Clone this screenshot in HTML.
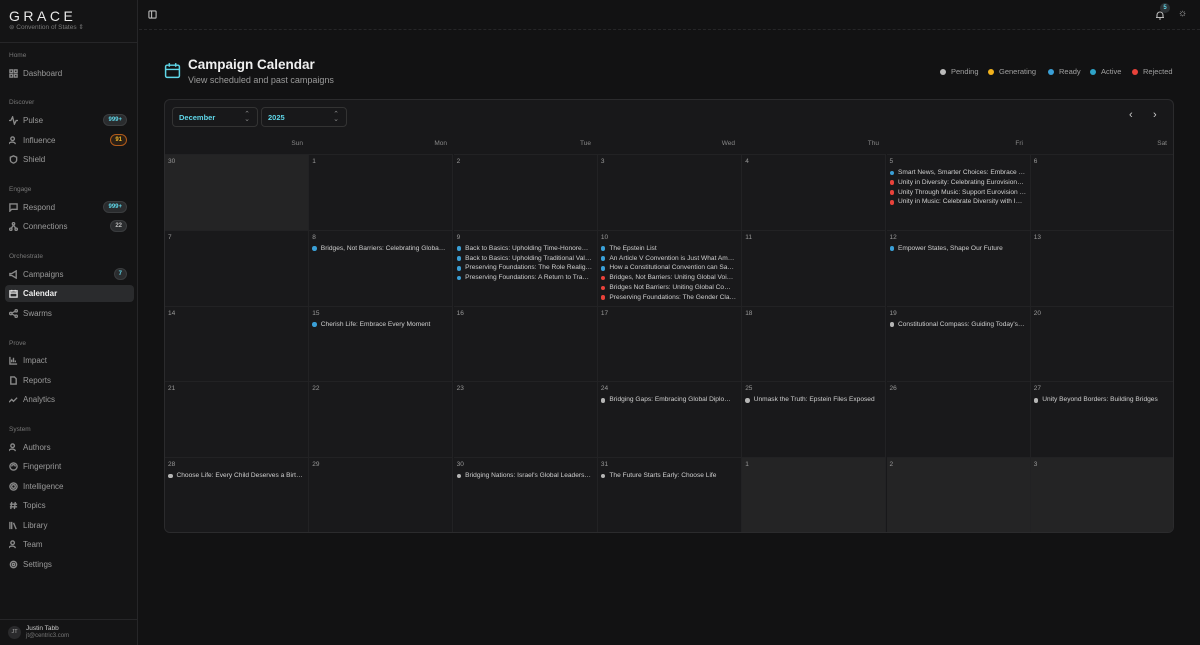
<!DOCTYPE html>
<html><head><meta charset="utf-8"><style>
*{box-sizing:border-box;margin:0;padding:0}
body{width:1200px;height:645px;background:#121213;font-family:"Liberation Sans",sans-serif;color:#ddd;overflow:hidden;position:relative}
.sb{position:absolute;left:0;top:0;width:138px;height:645px;background:#141415;border-right:1px solid #262628}
.logo{position:absolute;left:9px;top:8px;font-size:14px;letter-spacing:3.5px;color:#e8e8e8;font-weight:300}
.org{position:absolute;left:9px;top:23px;font-size:6.5px;color:#777}
.sbh{position:absolute;left:0;top:42px;width:138px;border-top:1px solid #262628}
.sec{position:absolute;left:9px;font-size:6.5px;color:#777}
.it{position:absolute;left:9px;font-size:8px;color:#9a9a9a;display:flex;align-items:center;gap:5px}
.it svg{width:9px;height:9px;stroke:#8a8a8a;fill:none;stroke-width:1.5}
.bd{position:absolute;right:10px;height:12px;border-radius:6px;font-size:6px;font-weight:bold;display:flex;align-items:center;justify-content:center;padding:0 4px;background:#2a2c2e;border:1px solid #3a3c3e;color:#5fd6e8}
.act{position:absolute;left:5px;top:285px;width:129px;height:17px;background:#2a2b2d;border-radius:4px}
.top{position:absolute;left:139px;top:0;right:0;height:30px;border-bottom:1px dashed #262628}
.card{position:absolute;left:164px;top:99px;width:1010px;height:434px;border:1px solid #2b2b2d;border-radius:6px;background:#18181a;overflow:hidden}
.sel{position:absolute;top:7px;height:20px;border:1px solid #333;border-radius:4px;font-size:7.5px;color:#5fd6e8;font-weight:bold;padding:5px 6px}
.sel span{position:absolute;right:7px;top:4px;color:#888;font-size:7px;line-height:5px;font-weight:normal}
.wd{position:absolute;top:40px;font-size:6.5px;color:#888;text-align:right;width:140px}
.cell{position:absolute;width:144px;height:76px;border-right:1px solid #222224;border-top:1px solid #222224;background:#19191b;padding:3px 3px}
.cell.o{background:#242425}
.dn{font-size:6.5px;color:#999;height:10px}
.ev{font-size:6.6px;color:#cfcfcf;height:9.8px;line-height:9.8px;white-space:nowrap;overflow:hidden;display:flex;align-items:center}
.ev i{width:4.5px;height:4.5px;border-radius:50%;margin:0 4px 0 0;flex:none;display:inline-block}
.b i{background:#3a9fd6}.r i{background:#e8423a}.g i{background:#b5b5b5}
.lg{position:absolute;top:67px;font-size:7.5px;color:#a0a0a0;display:flex;align-items:center}
.lg i{width:6px;height:6px;border-radius:50%;margin-right:5px;display:inline-block}
</style></head><body>
<div class="sb">
<div class="logo">GRACE</div>
<div class="org">⊜ Convention of States ⇕</div>
<div class="sbh"></div>
<div class="act"></div>
<div class="sec" style="top:52px">Home</div>
<div class="it" style="top:69px"><svg viewBox="0 0 10 10"><rect x="1" y="1" width="3" height="3"/><rect x="6" y="1" width="3" height="3"/><rect x="1" y="6" width="3" height="3"/><rect x="6" y="6" width="3" height="3"/></svg>Dashboard</div>
<div class="sec" style="top:99px">Discover</div>
<div class="it" style="top:116px"><svg viewBox="0 0 10 10"><path d="M0 5h2l2-4 2 8 2-4h2"/></svg>Pulse</div><div class="bd" style="top:114px">999+</div>
<div class="it" style="top:136px"><svg viewBox="0 0 10 10"><circle cx="4" cy="3" r="2"/><path d="M0 9c0-3 7-3 7 0"/></svg>Influence</div><div class="bd" style="top:134px;color:#f0b429;border-color:#b05a1a;background:#2a1f15">91</div>
<div class="it" style="top:155px"><svg viewBox="0 0 10 10"><path d="M5 1l3.5 1.5v3C8.5 8 5 9 5 9S1.5 8 1.5 5.5v-3z"/></svg>Shield</div>
<div class="sec" style="top:186px">Engage</div>
<div class="it" style="top:203px"><svg viewBox="0 0 10 10"><path d="M1 1h8v6H3L1 9z"/></svg>Respond</div><div class="bd" style="top:201px">999+</div>
<div class="it" style="top:222px"><svg viewBox="0 0 10 10"><circle cx="5" cy="2" r="1.3"/><circle cx="2" cy="8" r="1.3"/><circle cx="8" cy="8" r="1.3"/><path d="M5 3.5L2.5 7M5 3.5L7.5 7"/></svg>Connections</div><div class="bd" style="top:220px;color:#bbb">22</div>
<div class="sec" style="top:253px">Orchestrate</div>
<div class="it" style="top:270px"><svg viewBox="0 0 10 10"><path d="M1 4h2l5-3v8L3 6H1z"/></svg>Campaigns</div><div class="bd" style="top:268px">7</div>
<div class="it" style="top:289px;color:#eee"><svg viewBox="0 0 10 10" style="stroke:#ddd"><rect x="1" y="2" width="8" height="7"/><path d="M1 4.5h8M3 1v2M7 1v2"/></svg><b>Calendar</b></div>
<div class="it" style="top:309px"><svg viewBox="0 0 10 10"><circle cx="2" cy="5" r="1.3"/><circle cx="8" cy="2" r="1.3"/><circle cx="8" cy="8" r="1.3"/><path d="M3 4.5l4-2M3 5.5l4 2"/></svg>Swarms</div>
<div class="sec" style="top:340px">Prove</div>
<div class="it" style="top:356px"><svg viewBox="0 0 10 10"><path d="M1 1v8h8M3 7V4M5 7V2M7 7V5"/></svg>Impact</div>
<div class="it" style="top:376px"><svg viewBox="0 0 10 10"><path d="M2 1h4l2 2v6H2z"/></svg>Reports</div>
<div class="it" style="top:395px"><svg viewBox="0 0 10 10"><path d="M0 8l3-3 2 2 4-4"/></svg>Analytics</div>
<div class="sec" style="top:426px">System</div>
<div class="it" style="top:443px"><svg viewBox="0 0 10 10"><circle cx="4" cy="3" r="2"/><path d="M0 9c0-3 7-3 7 0"/></svg>Authors</div>
<div class="it" style="top:462px"><svg viewBox="0 0 10 10"><circle cx="5" cy="5" r="4"/><path d="M3 5a2 2 0 0 1 4 0"/></svg>Fingerprint</div>
<div class="it" style="top:482px"><svg viewBox="0 0 10 10"><circle cx="5" cy="5" r="4"/><circle cx="5" cy="5" r="2"/></svg>Intelligence</div>
<div class="it" style="top:501px"><svg viewBox="0 0 10 10"><path d="M3 1L2 9M7 1L6 9M1 3.5h8M1 6.5h8"/></svg>Topics</div>
<div class="it" style="top:521px"><svg viewBox="0 0 10 10"><path d="M1 1v8M3 1v8M5 2l3 7"/></svg>Library</div>
<div class="it" style="top:540px"><svg viewBox="0 0 10 10"><circle cx="4" cy="3" r="2"/><path d="M0 9c0-3 7-3 7 0"/></svg>Team</div>
<div class="it" style="top:560px"><svg viewBox="0 0 10 10"><circle cx="5" cy="5" r="3.5"/><circle cx="5" cy="5" r="1.3"/></svg>Settings</div>
<div style="position:absolute;left:0;top:619px;width:138px;border-top:1px solid #262628"></div>
<div style="position:absolute;left:8px;top:626px;width:13px;height:13px;border-radius:50%;background:#2a2a2c;font-size:5.5px;color:#aaa;text-align:center;line-height:13px">JT</div>
<div style="position:absolute;left:26px;top:625px;font-size:6.5px;color:#ccc">Justin Tabb</div>
<div style="position:absolute;left:26px;top:633px;font-size:6px;color:#777">jt@centric3.com</div>
</div>
<div class="top"></div>
<svg style="position:absolute;left:148px;top:10px" width="9" height="9" viewBox="0 0 10 10" fill="none" stroke="#bbb" stroke-width="1.2"><rect x="1" y="1" width="8" height="8" rx="1"/><path d="M4 1v8"/></svg>
<svg style="position:absolute;left:1155px;top:10px" width="10" height="10" viewBox="0 0 10 10" fill="none" stroke="#bbb" stroke-width="1.1"><path d="M2 7.5V5a3 3 0 0 1 6 0v2.5h1H1zM4 9h2"/></svg>
<div style="position:absolute;left:1160px;top:3px;width:10px;height:10px;border-radius:50%;background:#2c3134;font-size:6px;color:#5fd6e8;text-align:center;line-height:10px;font-weight:bold">5</div>
<div style="position:absolute;left:1178px;top:8px;font-size:10px;color:#bbb">☼</div>
<svg style="position:absolute;left:164px;top:62px" width="17" height="17" viewBox="0 0 16 16" fill="none" stroke="#5fd6e8" stroke-width="1.4"><rect x="1.5" y="3" width="13" height="11.5" rx="1.5"/><path d="M1.5 7h13M5 1v3.5M11 1v3.5"/></svg>
<div style="position:absolute;left:188px;top:57px;font-size:13.5px;font-weight:bold;color:#f0f0f0">Campaign Calendar</div>
<div style="position:absolute;left:188px;top:75px;font-size:9px;color:#9a9a9a">View scheduled and past campaigns</div>
<div class="lg" style="left:940px"><i style="background:#bbb"></i>Pending</div>
<div class="lg" style="left:988px"><i style="background:#f2b21c"></i>Generating</div>
<div class="lg" style="left:1048px"><i style="background:#3a9fd6"></i>Ready</div>
<div class="lg" style="left:1090px"><i style="background:#2ea3c8"></i>Active</div>
<div class="lg" style="left:1132px"><i style="background:#e8423a"></i>Rejected</div>
<div class="card">
<div class="sel" style="left:7px;width:86px">December<span>⌃<br>⌄</span></div>
<div class="sel" style="left:96px;width:86px">2025<span>⌃<br>⌄</span></div>
<div style="position:absolute;left:964px;top:9px;font-size:11px;color:#ccc">‹</div>
<div style="position:absolute;left:988px;top:9px;font-size:11px;color:#ccc">›</div>
<div class="wd" style="left:-2px">Sun</div><div class="wd" style="left:142px">Mon</div><div class="wd" style="left:286px">Tue</div><div class="wd" style="left:430px">Wed</div><div class="wd" style="left:574px">Thu</div><div class="wd" style="left:718px">Fri</div><div class="wd" style="left:862px">Sat</div>
<div id="g"></div>
</div>
<script>
var ev={1:[],8:[["b","Bridges, Not Barriers: Celebrating Globa…"]],9:[["b","Back to Basics: Upholding Time-Honore…"],["b","Back to Basics: Upholding Traditional Val…"],["b","Preserving Foundations: The Role Realig…"],["b","Preserving Foundations: A Return to Tra…"]],
10:[["b","The Epstein List"],["b","An Article V Convention is Just What Am…"],["b","How a Constitutional Convention can Sa…"],["r","Bridges, Not Barriers: Uniting Global Voi…"],["r","Bridges Not Barriers: Uniting Global Co…"],["r","Preserving Foundations: The Gender Cla…"]],
5:[["b","Smart News, Smarter Choices: Embrace …"],["r","Unity in Diversity: Celebrating Eurovision…"],["r","Unity Through Music: Support Eurovision …"],["r","Unity in Music: Celebrate Diversity with I…"]],
12:[["b","Empower States, Shape Our Future"]],15:[["b","Cherish Life: Embrace Every Moment"]],19:[["g","Constitutional Compass: Guiding Today's…"]],
24:[["g","Bridging Gaps: Embracing Global Diplo…"]],25:[["g","Unmask the Truth: Epstein Files Exposed"]],27:[["g","Unity Beyond Borders: Building Bridges"]],
28:[["g","Choose Life: Every Child Deserves a Birt…"]],30:[["g","Bridging Nations: Israel's Global Leaders…"]],31:[["g","The Future Starts Early: Choose Life"]]};
var h="",d=[30];for(var i=1;i<=31;i++)d.push(i);d.push(1,2,3);
for(var k=0;k<35;k++){var r=Math.floor(k/7),c=k%7,n=d[k],o=(k==0||k>31);
h+='<div class="cell'+(o?' o':'')+'" style="left:'+(c*144.3)+'px;top:'+(54+r*75.8)+'px"><div class="dn">'+n+'</div>';
if(!o&&ev[n])ev[n].forEach(function(e){h+='<div class="ev '+e[0]+'"><i></i>'+e[1]+'</div>'});h+='</div>';}
document.getElementById('g').innerHTML=h;
</script>
</body></html>
